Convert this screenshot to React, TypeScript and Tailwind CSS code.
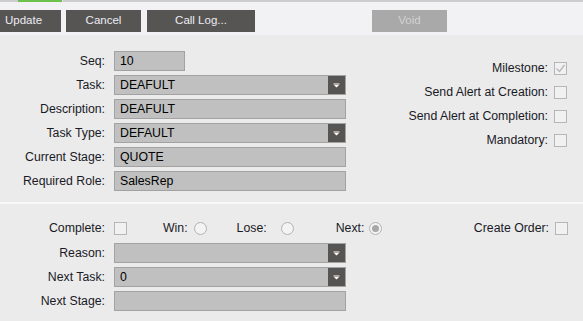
import React from 'react';

const font = { fontFamily: '"Liberation Sans", Arial, sans-serif' };

function ToolButton({ label, w, disabled }: { label: string; w: string; disabled?: boolean }) {
  return (
    <div
      className={`flex h-[22px] shrink-0 items-center justify-center text-[11.5px] ${w} ${
        disabled ? 'bg-[#a9a9a9] text-[#d2d2d2]' : 'bg-[#575553] text-[#ececf4]'
      }`}
    >
      {label}
    </div>
  );
}

function Arrow() {
  return (
    <div className="flex h-full w-[17px] shrink-0 items-center justify-center bg-[#575553]">
      <svg width="7" height="5" viewBox="0 0 7 5">
        <rect x="0.5" y="0.5" width="6" height="1" fill="#ffffff" />
        <polygon points="1,2 6,2 3.5,4.5" fill="#ffffff" />
      </svg>
    </div>
  );
}

function Field({ value, select, w = 'w-[232px]' }: { value?: string; select?: boolean; w?: string }) {
  return (
    <div className={`flex h-[20px] items-center border border-[#a2a2a2] bg-[#c0c0c0] ${w}`}>
      <div className="flex-1 pl-[5px] text-[12.3px] text-black">{value}</div>
      {select && <Arrow />}
    </div>
  );
}

function Check({ checked }: { checked?: boolean }) {
  return (
    <div className="flex h-[13px] w-[13px] shrink-0 items-center justify-center border border-[#b6b6b6] bg-[#f1f1f1]">
      {checked && (
        <svg width="11" height="11" viewBox="0 0 11 11">
          <polyline points="1.5,5.5 4.5,8.5 9.5,2" fill="none" stroke="#b8b8b8" strokeWidth="1.4" />
        </svg>
      )}
    </div>
  );
}

function Radio({ on }: { on?: boolean }) {
  return (
    <div className="flex h-[13px] w-[13px] shrink-0 items-center justify-center rounded-full border border-[#b2b2b2] bg-[#f3f3f3]">
      {on && <div className="h-[7px] w-[7px] rounded-full bg-[#a8a8a8]" />}
    </div>
  );
}

function Row({ label, children }: { label: string; children: React.ReactNode }) {
  return (
    <div className="flex h-[20px] items-center">
      <div className="w-[106px] pr-[1px] text-right text-[12.3px] text-[#1a1a26]">{label}</div>
      <div className="ml-[8px]">{children}</div>
    </div>
  );
}

function CheckRow({ label, checked }: { label: string; checked?: boolean }) {
  return (
    <div className="flex h-[24px] items-center justify-end gap-[6px]">
      <span className="text-[12.3px] text-[#1a1a26]">{label}</span>
      <Check checked={checked} />
    </div>
  );
}

export default function App() {
  return (
    <div className="h-[321px] w-[583px] overflow-hidden bg-[#ebebeb]" style={font}>
      <div className="flex h-[2px] bg-[#cdcdcd]">
        <div className="ml-[18px] w-[44px] bg-[#6cc24a]" />
        <div className="w-[1px] bg-[#e4e4e4]" />
      </div>
      <div className="flex h-[33px] overflow-hidden bg-[#f2f2f4] pt-[8px]">
        <div className="ml-[-14px]">
          <ToolButton label="Update" w="w-[75px]" />
        </div>
        <div className="ml-[5px]">
          <ToolButton label="Cancel" w="w-[75px]" />
        </div>
        <div className="ml-[6px]">
          <ToolButton label="Call Log..." w="w-[108px]" />
        </div>
        <div className="ml-[117px]">
          <ToolButton label="Void" w="w-[75px]" disabled />
        </div>
      </div>

      <div className="flex h-[167px] pt-[16px]">
        <div className="flex flex-col gap-[4px]">
          <Row label="Seq:">
            <Field value="10" w="w-[71px]" />
          </Row>
          <Row label="Task:">
            <Field value="DEAFULT" select />
          </Row>
          <Row label="Description:">
            <Field value="DEAFULT" />
          </Row>
          <Row label="Task Type:">
            <Field value="DEFAULT" select />
          </Row>
          <Row label="Current Stage:">
            <Field value="QUOTE" />
          </Row>
          <Row label="Required Role:">
            <Field value="SalesRep" />
          </Row>
        </div>
        <div className="flex flex-1 flex-col pr-[16px] pt-[5px]">
          <CheckRow label="Milestone:" checked />
          <CheckRow label="Send Alert at Creation:" />
          <CheckRow label="Send Alert at Completion:" />
          <CheckRow label="Mandatory:" />
        </div>
      </div>

      <div className="h-[2px] bg-[#f8f8f8]" />

      <div className="flex flex-col pt-[14px]">
        <div className="flex h-[20px] items-center pr-[15px] text-[12.3px] text-[#1a1a26]">
          <div className="w-[106px] pr-[1px] text-right">Complete:</div>
          <div className="ml-[8px]">
            <Check />
          </div>
          <span className="ml-[36px]">Win:</span>
          <div className="ml-[6px]">
            <Radio />
          </div>
          <span className="ml-[30px]">Lose:</span>
          <div className="ml-[14px]">
            <Radio />
          </div>
          <span className="ml-[42px]">Next:</span>
          <div className="ml-[5px]">
            <Radio on />
          </div>
          <span className="ml-auto">Create Order:</span>
          <div className="ml-[6px]">
            <Check />
          </div>
        </div>
        <div className="mt-[5px] flex flex-col gap-[4px]">
          <Row label="Reason:">
            <Field select />
          </Row>
          <Row label="Next Task:">
            <Field value="0" select />
          </Row>
          <Row label="Next Stage:">
            <Field />
          </Row>
        </div>
      </div>
    </div>
  );
}
